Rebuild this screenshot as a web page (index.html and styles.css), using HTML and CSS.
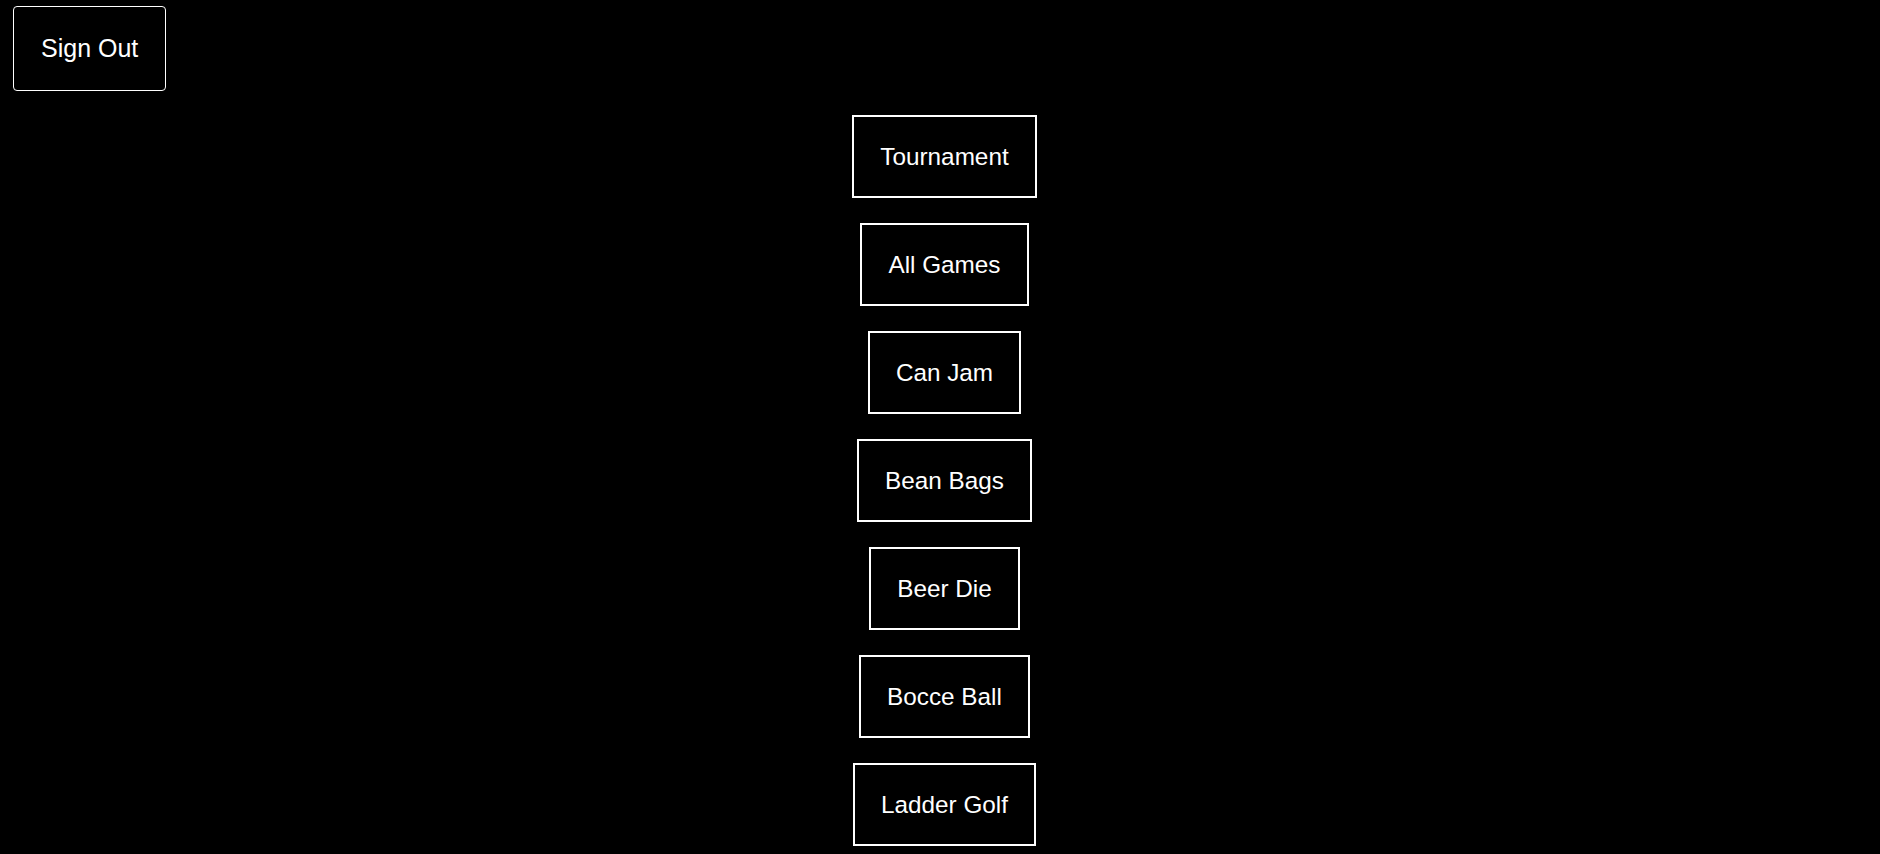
FILE: index.html
```html
<!DOCTYPE html>
<html lang="en">
<head>
<meta charset="utf-8">
<title>Games</title>
<link rel="stylesheet" href="styles.css">
</head>
<body>
<header class="top-bar">
  <button class="sign-out">Sign Out</button>
</header>
<nav class="game-list">
  <button class="game-btn">Tournament</button>
  <button class="game-btn">All Games</button>
  <button class="game-btn">Can Jam</button>
  <button class="game-btn">Bean Bags</button>
  <button class="game-btn">Beer Die</button>
  <button class="game-btn">Bocce Ball</button>
  <button class="game-btn">Ladder Golf</button>
</nav>
</body>
</html>
```

FILE: styles.css
```css
html, body {
  margin: 0;
  padding: 0;
  background: #000;
  color: #fff;
  font-family: "Liberation Sans", Arial, sans-serif;
}

.top-bar {
  display: flex;
  padding: 6px 0 0 13px;
}

.sign-out {
  font-family: "Liberation Sans", Arial, sans-serif;
  font-size: 25px;
  line-height: 27px;
  color: #fff;
  background: #000;
  border: 1px solid #fff;
  border-radius: 4px;
  padding: 28px 27px;
  margin: 0;
  cursor: pointer;
}

.game-list {
  display: flex;
  flex-direction: column;
  align-items: center;
  gap: 25px;
  margin-top: 24px;
  padding-left: 9px;
}

.game-btn {
  font-family: "Liberation Sans", Arial, sans-serif;
  font-size: 24.3px;
  line-height: 27px;
  color: #fff;
  background: #000;
  border: 2px solid #fff;
  border-radius: 0;
  padding: 26px 26px;
  margin: 0;
  cursor: pointer;
}
```
